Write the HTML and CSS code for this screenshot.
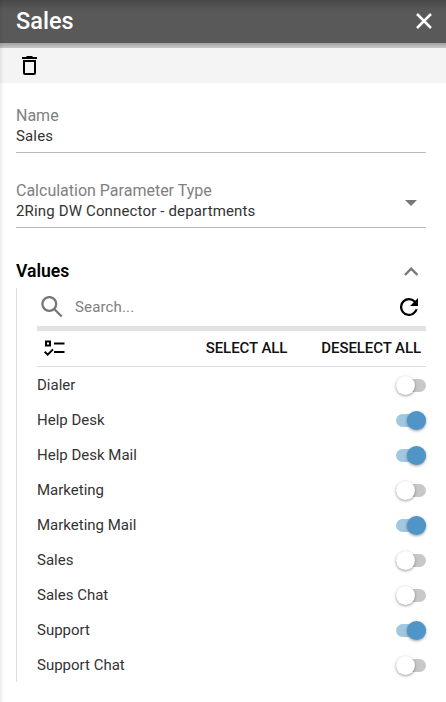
FILE: index.html
```html
<!DOCTYPE html>
<html lang="en">
<head>
<meta charset="utf-8">
<title>Sales</title>
<link rel="stylesheet" href="styles.css">
</head>
<body>
<main class="panel">
  <header class="header">
    <h1>Sales</h1>
    <svg class="close" viewBox="0 0 16 16"><path d="M1 1L15 15M15 1L1 15"/></svg>
  </header>
  <div class="toolbar">
    <svg class="trash" viewBox="0 0 15 19"><path d="M0 1h4l1-1h5l1 1h4v2H0zM1 4h13v13q0 2-2 2H3q-2 0-2-2zM3 6v11h9V6z" fill-rule="evenodd"/></svg>
  </div>
  <section class="field name">
    <label>Name</label>
    <div class="value">Sales</div>
  </section>
  <section class="field type">
    <label>Calculation Parameter Type</label>
    <div class="value">2Ring DW Connector - departments</div>
    <svg class="arrow" viewBox="0 0 12 6"><path d="M0 0h12L6 6z"/></svg>
  </section>
  <div class="section-title">
    <h2>Values</h2>
    <svg class="chevron" viewBox="0 0 15 9"><path d="M.9 8l6.3-6.3L13.5 8"/></svg>
  </div>
  <section class="values">
    <div class="search">
      <svg class="magnifier" viewBox="0 0 22 22"><circle cx="8.3" cy="8" r="6.9"/><path d="M13.2 13l7.5 7.5"/></svg>
      <span class="placeholder">Search...</span>
      <svg class="refresh" viewBox="4 4 16 16"><path d="M17.65 6.35A7.958 7.958 0 0 0 12 4a8 8 0 1 0 7.73 10h-2.08A6 6 0 1 1 12 6c1.66 0 3.14.69 4.22 1.78L13 11h7V4z"/></svg>
    </div>
    <div class="actions">
      <svg class="checklist" viewBox="0 0 21 17"><path d="M2 1.5h4v4H2zM10 3.5h10.5M10 12h10.5M.7 11.7l3 3L9 9.4"/></svg>
      <span class="select">SELECT ALL</span>
      <span class="deselect">DESELECT ALL</span>
    </div>
    <ul class="list">
      <li>Dialer<i class="switch"></i></li>
      <li>Help Desk<i class="switch on"></i></li>
      <li>Help Desk Mail<i class="switch on"></i></li>
      <li>Marketing<i class="switch"></i></li>
      <li>Marketing Mail<i class="switch on"></i></li>
      <li>Sales<i class="switch"></i></li>
      <li>Sales Chat<i class="switch"></i></li>
      <li>Support<i class="switch on"></i></li>
      <li>Support Chat<i class="switch"></i></li>
    </ul>
  </section>
</main>
</body>
</html>
```
FILE: styles.css
```css
* { box-sizing: border-box; }
body { margin: 0; font-family: Roboto, sans-serif; color: #333; background: #fff; }
svg { display: block; flex: none; }
h1, h2, ul { margin: 0; padding: 0; }
.panel { height: 702px; overflow: hidden; position: relative; }
.panel::after {
  content: ""; position: absolute; inset: 0 auto 0 0; width: 4px;
  background: linear-gradient(to right, rgba(0,0,0,.07), rgba(0,0,0,0));
}
.header {
  height: 43px; padding: 0 14px 0 16px; display: flex; align-items: center;
  justify-content: space-between; color: #fff;
  background: linear-gradient(#474747, #575757 9px, #595959 14px);
}
.header h1 { font-size: 23.5px; font-weight: 500; line-height: 40px; padding-bottom: 2px; }
.close { width: 16px; height: 16px; margin-bottom: 1px; fill: none; stroke: #fff; stroke-width: 2.5; }
.toolbar {
  height: 40px; padding: 13px 0 0 22px;
  background: linear-gradient(#a0a0a0, #c8c8c8 5px, #f4f4f4 5px);
}
.trash { width: 15px; height: 19px; }
.field { position: relative; margin: 0 20px 0 16px; border-bottom: 1px solid #bbb; }
.field label { display: block; font-size: 16px; line-height: 20px; color: #808080; }
.value { font-size: 15px; line-height: 20px; letter-spacing: .15px; }
.name { height: 70px; padding-top: 23px; }
.type { height: 75px; padding-top: 28px; }
.arrow { position: absolute; right: 9px; top: 47px; width: 12px; height: 6px; fill: #777; }
.section-title {
  height: 60px; margin: 0 27px 0 16px; padding-top: 26px;
  display: flex; justify-content: space-between;
}
.section-title h2 { font-size: 17.6px; line-height: 34px; font-weight: 600; color: #000; }
.chevron { width: 15px; height: 9px; margin-top: 13px; fill: none; stroke: #777; stroke-width: 2.4; }
.values { margin: 0 20px 0 16px; padding-left: 20px; border-left: 1px solid #ddd; height: 394px; }
.search { height: 43px; border-bottom: 5px solid #e2e2e2; display: flex; align-items: center; padding: 0 8px 0 4px; }
.magnifier { width: 22px; height: 22px; fill: none; stroke: #777; stroke-width: 2.3; }
.placeholder { flex: 1; margin-left: 12px; font-size: 15px; color: #808080; letter-spacing: .15px; }
.refresh { width: 18px; height: 18px; }
.actions {
  height: 36px; border-bottom: 1px solid #ddd; display: flex; align-items: center;
  padding: 0 5px 1px 7px; color: #111; font-size: 15px; font-weight: 500; letter-spacing: -.08px;
}
.checklist { width: 21px; height: 17px; fill: none; stroke: #000; stroke-width: 2; }
.select { margin-left: auto; margin-right: 34px; }
.list { list-style: none; }
.list li {
  height: 35px; display: flex; align-items: center; justify-content: space-between;
  font-size: 15px;
}
.switch { position: relative; width: 30px; height: 13px; border-radius: 7px; background: #c8c8c8; margin-top: 2px; }
.switch::after {
  content: ""; position: absolute; left: 0; top: -3px; width: 19px; height: 19px;
  border-radius: 50%; background: #fff; box-shadow: 0 1px 3px rgba(0,0,0,.4);
}
.switch.on { background: #a2c7e1; }
.switch.on::after { left: auto; right: 0; background: #4f95c8; }
```
